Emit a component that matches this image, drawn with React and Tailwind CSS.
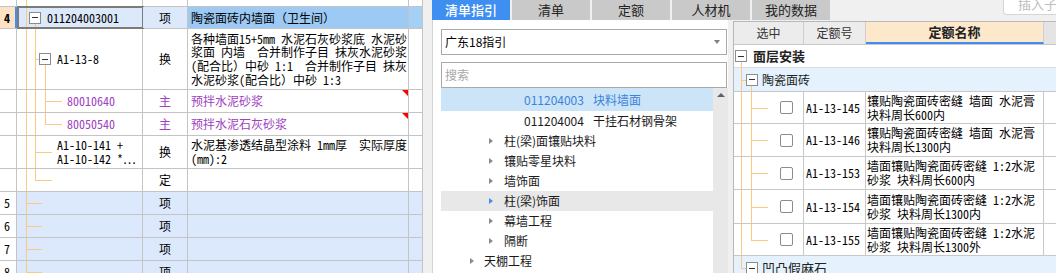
import React from 'react'

const MONO = "font-['Noto_Sans_Mono_CJK_SC','Noto_Sans_CJK_SC',monospace]"
const LINE = 'bg-[#fcc983]'

const W = ['w-[17px]', 'w-[126px]', 'w-[45px]', 'w-[221px]', 'w-[14px]']
const CELL = 'border-r border-[#c4c4c4]'

function LRow({ h, cells = [], cls = [] }) {
  return (
    <div className={`flex shrink-0 border-b border-[#c4c4c4] ${h}`}>
      {W.map((w, i) => (
        <div key={i} className={`relative flex shrink-0 items-center ${w} ${cls[i] ?? CELL}`}>
          {cells[i]}
        </div>
      ))}
    </div>
  )
}

function Box({ className = '' }) {
  return (
    <span className={`relative z-10 flex h-[12px] w-[12px] shrink-0 items-center justify-center border border-[#8c8c8c] bg-white ${className}`}>
      <span className="h-px w-[6px] bg-[#333]" />
    </span>
  )
}

function Flag() {
  return <span className="absolute right-0 top-0 h-0 w-0 border-l-[6px] border-t-[6px] border-l-transparent border-t-[#ff0000]" />
}

function LeftTable() {
  const root = <i className={`absolute bottom-0 left-[9px] top-0 w-px ${LINE}`} />
  return (
    <div className={`flex w-[423px] shrink-0 flex-col overflow-hidden bg-white text-[12px] leading-[14px] text-black ${MONO}`}>
      <LRow h="h-[7px]" cells={[null, root]} />

      <LRow
        h="h-[22px]"
        cls={[
          'border-r-2 border-[#3f8ef2] bg-[#fde3c3] justify-center',
          'bg-[#dce9fb] pl-[12px]',
          `${CELL} bg-[#dce9fb] justify-center`,
          `${CELL} bg-[#9ccaf5] pl-[3px]`,
          `${CELL} bg-[#a6cff5]`,
        ]}
        cells={[
          <b className="pr-[1px]">4</b>,
          <>
            {root}
            <i className={`absolute bottom-0 left-[18px] top-[17px] w-px ${LINE}`} />
            <span className="pointer-events-none absolute -bottom-px -right-px -top-px left-0 border-2 border-[#7b7b7b]" />
            <Box />
            <span className="ml-[6px]">011204003001</span>
          </>,
          '项',
          '陶瓷面砖内墙面（卫生间）',
        ]}
      />

      <LRow
        h="h-[61px]"
        cls={[CELL, `${CELL} pl-[22px]`, `${CELL} justify-center`, `${CELL} pl-[3px]`]}
        cells={[
          null,
          <>
            {root}
            <i className={`absolute bottom-0 left-[18px] top-0 w-px ${LINE}`} />
            <i className={`absolute left-[18px] top-1/2 h-px w-[4px] ${LINE}`} />
            <i className={`absolute bottom-0 left-[28px] top-[36px] w-px ${LINE}`} />
            <Box />
            <span className="ml-[6px]">A1-13-8</span>
          </>,
          '换',
          <div className="whitespace-pre leading-[13.6px]">
            <div>各种墙面15+5mm 水泥石灰砂浆底 水泥砂</div>
            <div>浆面 内墙  合并制作子目 抹灰水泥砂浆</div>
            <div>(配合比）中砂 1:1  合并制作子目 抹灰</div>
            <div>水泥砂浆(配合比）中砂 1:3</div>
          </div>,
        ]}
      />

      <LRow
        h="h-[23px]"
        cls={[CELL, `${CELL} pl-[50px] text-[#a040c0]`, `${CELL} justify-center text-[#a040c0]`, `${CELL} pl-[3px] text-[#a040c0]`]}
        cells={[
          null,
          <>
            {root}
            <i className={`absolute bottom-0 left-[18px] top-0 w-px ${LINE}`} />
            <i className={`absolute bottom-0 left-[28px] top-0 w-px ${LINE}`} />
            <i className={`absolute left-[28px] top-1/2 h-px w-[17px] ${LINE}`} />
            80010640
          </>,
          '主',
          <>
            预拌水泥砂浆
            <Flag />
          </>,
        ]}
      />

      <LRow
        h="h-[23px]"
        cls={[CELL, `${CELL} pl-[50px] text-[#a040c0]`, `${CELL} justify-center text-[#a040c0]`, `${CELL} pl-[3px] text-[#a040c0]`]}
        cells={[
          null,
          <>
            {root}
            <i className={`absolute bottom-0 left-[18px] top-0 w-px ${LINE}`} />
            <i className={`absolute left-[28px] top-0 h-1/2 w-px ${LINE}`} />
            <i className={`absolute left-[28px] top-1/2 h-px w-[17px] ${LINE}`} />
            80050540
          </>,
          '主',
          <>
            预拌水泥石灰砂浆
            <Flag />
          </>,
        ]}
      />

      <LRow
        h="h-[33px]"
        cls={[CELL, `${CELL} pl-[40px]`, `${CELL} justify-center`, `${CELL} pl-[3px]`]}
        cells={[
          null,
          <>
            {root}
            <i className={`absolute bottom-0 left-[18px] top-0 w-px ${LINE}`} />
            <i className={`absolute left-[18px] top-1/2 h-px w-[17px] ${LINE}`} />
            <div className="whitespace-pre">
              <div>A1-10-141 +</div>
              <div>A1-10-142 *…</div>
            </div>
          </>,
          '换',
          <div className="whitespace-pre">
            <div>水泥基渗透结晶型涂料 1mm厚  实际厚度</div>
            <div>(mm):2</div>
          </div>,
        ]}
      />

      <LRow
        h="h-[23px]"
        cls={[CELL, CELL, `${CELL} justify-center`]}
        cells={[
          null,
          <>
            {root}
            <i className={`absolute left-[18px] top-0 h-1/2 w-px ${LINE}`} />
            <i className={`absolute left-[18px] top-1/2 h-px w-[17px] ${LINE}`} />
          </>,
          '定',
        ]}
      />

      {[5, 6, 7, 8].map((n) => (
        <LRow
          key={n}
          h="h-[23px]"
          cls={[`${CELL} pl-[4px]`, `${CELL} bg-[#dce9fc]`, `${CELL} justify-center bg-[#dce9fc]`, `${CELL} bg-[#dce9fc]`, `${CELL} bg-[#dce9fc]`]}
          cells={[
            n,
            <>
              {root}
              <i className={`absolute left-[9px] top-1/2 h-px w-[16px] ${LINE}`} />
            </>,
            '项',
          ]}
        />
      ))}
    </div>
  )
}

function TabBar() {
  const tabs = ['清单', '定额', '人材机', '我的数据']
  return (
    <div className="flex h-[20px] shrink-0 gap-[2px] text-[13px]">
      <div className="flex w-[78px] items-center justify-center bg-[#3f8ff2] font-medium text-white">清单指引</div>
      {tabs.map((t) => (
        <div key={t} className="flex w-[78px] items-center justify-center bg-[#c9c9c9] text-[#222]">
          {t}
        </div>
      ))}
      <div className="flex-1" />
      <div className="-mt-[6px] flex h-[21px] w-[53px] items-center overflow-hidden whitespace-nowrap rounded-bl-[4px] border-b border-l border-[#d5d5d5] bg-white pl-[14px] text-[13px] text-[#bdbdbd]">
        插入子目
      </div>
    </div>
  )
}

function Tri({ blue }) {
  return (
    <span
      className={`h-0 w-0 border-y-[3.5px] border-l-[4px] border-y-transparent ${blue ? 'border-l-[#3f8ef2]' : 'border-l-[#8a8a8a]'}`}
    />
  )
}

function GuidePanel() {
  const sub = ['柱(梁)面镶贴块料', '镶贴零星块料', '墙饰面', '柱(梁)饰面', '幕墙工程', '隔断']
  return (
    <div className="flex w-[296px] shrink-0 flex-col border-l border-[#d4d4d4] bg-white pl-[8px] pt-[9px] text-[12px]">
      <div className="mr-[1px] flex h-[26px] shrink-0 items-center justify-between border border-[#a9a9a9] pl-[3px] pr-[6px] text-black">
        <span>广东18指引</span>
        <span className="h-0 w-0 border-x-[3px] border-t-[4px] border-x-transparent border-t-[#808080]" />
      </div>
      <div className="mr-[1px] mt-[7px] flex h-[26px] shrink-0 items-center border border-[#a9a9a9] pl-[3px] text-[#a8a8a8]">搜索</div>
      <div className="flex min-h-0 flex-1">
        <div className="flex-1 text-[#1a1a1a]">
          <div className="flex h-[23px] items-center bg-[#cce4f8] pl-[83px] text-[#3b82d8]">
            011204003<span className="ml-[9px]">块料墙面</span>
          </div>
          <div className="flex h-[20px] items-center pl-[83px]">
            011204004<span className="ml-[9px]">干挂石材钢骨架</span>
          </div>
          {sub.map((s) => (
            <div key={s} className={`flex h-[20px] items-center pl-[48px] ${s === '柱(梁)饰面' ? 'bg-[#e8e8e8]' : ''}`}>
              <Tri blue={s === '柱(梁)饰面'} />
              <span className="ml-[11px]">{s}</span>
            </div>
          ))}
          <div className="flex h-[20px] items-center pl-[29px]">
            <Tri />
            <span className="ml-[10px]">天棚工程</span>
          </div>
        </div>
        <div className="flex w-[15px] shrink-0 justify-center bg-[#e8e8e8] pt-[5px]">
          <span className="h-0 w-0 border-x-[4px] border-b-[4px] border-x-transparent border-b-[#606066]" />
        </div>
      </div>
    </div>
  )
}

const RW = ['w-[70px]', 'w-[62px]', 'w-[178px]', 'w-[12px]']

function QuotaRow({ h, code, name, last }) {
  return (
    <div className={`flex shrink-0 border-b border-[#c8c8c8] ${h}`}>
      <div className={`relative flex shrink-0 items-center border-r border-[#c8c8c8] pl-[46px] ${RW[0]}`}>
        <i className={`absolute bottom-0 left-[7px] top-0 w-px ${LINE}`} />
        <i className={`absolute left-[17px] top-0 w-px ${last ? 'h-1/2' : 'bottom-0'} ${LINE}`} />
        <i className={`absolute left-[17px] top-1/2 h-px w-[17px] ${LINE}`} />
        <span className="h-[13px] w-[13px] rounded-[2px] border border-[#8c8c8c] bg-white" />
      </div>
      <div className={`flex shrink-0 items-center border-r border-[#c8c8c8] pl-[2px] ${RW[1]}`}>{code}</div>
      <div className={`flex shrink-0 items-center whitespace-pre border-r border-[#c8c8c8] pl-[1px] leading-[14px] ${RW[2]}`}>
        <div>
          <div>{name[0]}</div>
          <div>{name[1]}</div>
        </div>
      </div>
      <div className="flex-1" />
    </div>
  )
}

function QuotaPanel() {
  const rows = [
    ['h-[32px]', 'A1-13-145', ['镶贴陶瓷面砖密缝 墙面 水泥膏', '块料周长600内']],
    ['h-[33px]', 'A1-13-146', ['镶贴陶瓷面砖密缝 墙面 水泥膏', '块料周长1300内']],
    ['h-[33px]', 'A1-13-153', ['墙面镶贴陶瓷面砖密缝 1:2水泥', '砂浆 块料周长600内']],
    ['h-[34px]', 'A1-13-154', ['墙面镶贴陶瓷面砖密缝 1:2水泥', '砂浆 块料周长1300内']],
    ['h-[32px]', 'A1-13-155', ['墙面镶贴陶瓷面砖密缝 1:2水泥', '砂浆 块料周长1300外']],
  ]
  return (
    <div className="mt-[1px] flex min-w-0 flex-1 flex-col overflow-hidden border-l border-t border-[#b8b8b8] bg-white">
      <div className="flex h-[23px] shrink-0 border-b border-[#c8c8c8] bg-[#ececec] text-[12px] text-[#333]">
        <div className={`flex shrink-0 items-center justify-center border-r border-[#cfcfcf] ${RW[0]}`}>选中</div>
        <div className={`flex shrink-0 items-center justify-center border-r border-[#cfcfcf] ${RW[1]}`}>定额号</div>
        <div className={`flex shrink-0 items-center justify-center border-b-2 border-r border-b-[#3d8df5] border-r-[#cfcfcf] bg-[#fde8cc] text-[13px] font-bold text-[#222] ${RW[2]}`}>
          定额名称
        </div>
        <div className="flex-1 bg-[#e4e4e4]" />
      </div>

      <div className="relative flex h-[23px] shrink-0 items-center border-b border-[#d6dde4] pl-[1px] text-[13px] font-bold text-[#222]">
        <i className={`absolute bottom-0 left-[7px] top-[17px] w-px ${LINE}`} />
        <Box />
        <span className="ml-[6px]">面层安装</span>
      </div>

      <div className="relative flex h-[24px] shrink-0 items-center border-b border-[#c8c8c8] bg-[#e5f2fd] pl-[12px] text-[12px] text-[#222]">
        <i className={`absolute bottom-0 left-[7px] top-0 w-px ${LINE}`} />
        <i className={`absolute left-[7px] top-1/2 h-px w-[5px] ${LINE}`} />
        <i className={`absolute bottom-0 left-[17px] top-[17px] w-px ${LINE}`} />
        <Box />
        <span className="ml-[4px]">陶瓷面砖</span>
      </div>

      <div className={`flex flex-col text-[12px] text-black ${MONO}`}>
        {rows.map(([h, code, name], i) => (
          <QuotaRow key={code} h={h} code={code} name={name} last={i === rows.length - 1} />
        ))}
      </div>

      <div className="relative flex h-[24px] shrink-0 items-center bg-[#e5f2fd] pl-[12px] text-[13px] text-[#222]">
        <i className={`absolute left-[7px] top-0 h-1/2 w-px ${LINE}`} />
        <i className={`absolute left-[7px] top-1/2 h-px w-[5px] ${LINE}`} />
        <Box />
        <span className="ml-[4px]">凹凸假麻石</span>
      </div>
    </div>
  )
}

export default function App() {
  return (
    <div className="flex h-[273px] w-[1056px] overflow-hidden bg-[#f0f0f0] font-['Noto_Sans_CJK_SC','Noto_Sans',sans-serif]">
      <LeftTable />
      <div className="w-[9px] shrink-0" />
      <div className="flex w-[624px] shrink-0 flex-col">
        <TabBar />
        <div className="flex min-h-0 flex-1">
          <GuidePanel />
          <div className="w-[5px] shrink-0" />
          <QuotaPanel />
        </div>
      </div>
    </div>
  )
}
